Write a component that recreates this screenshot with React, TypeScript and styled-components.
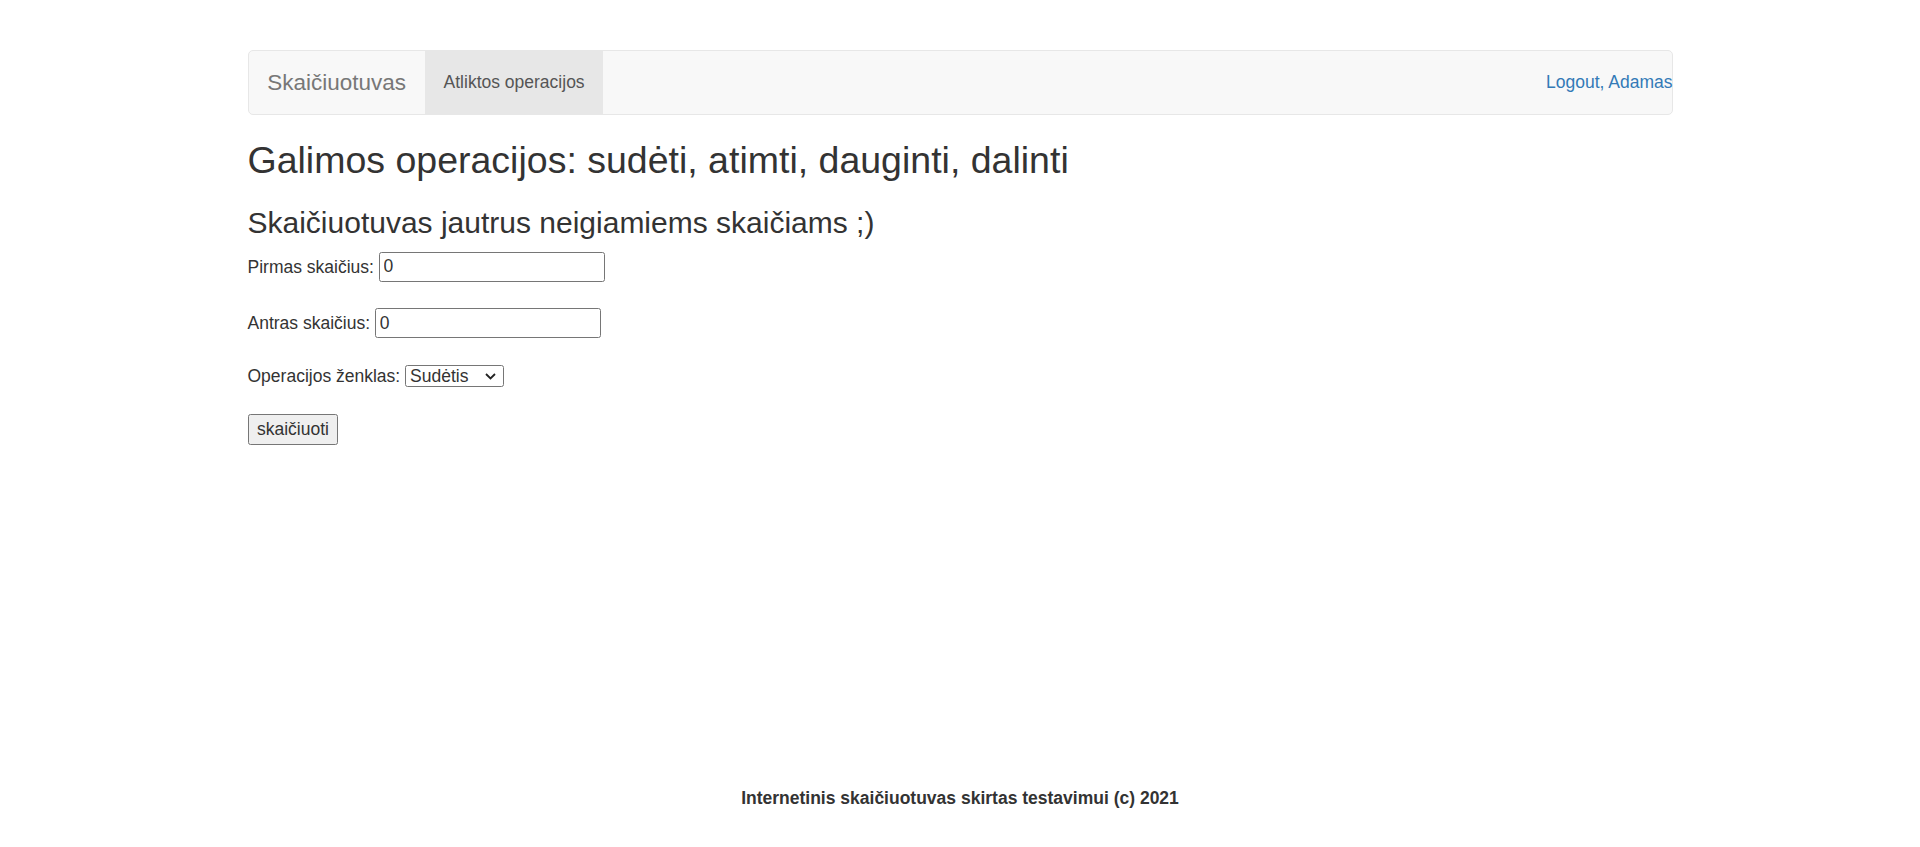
import React from "react";
import styled, { createGlobalStyle } from "styled-components";

const GlobalStyle = createGlobalStyle`
  html, body { margin: 0; padding: 0; background: #fff; }
  body {
    font-family: "Liberation Sans", Arial, Helvetica, sans-serif;
    font-size: 17.5px;
    line-height: 25px;
    color: #333;
  }
  *, *::before, *::after { box-sizing: border-box; }
`;

const Page = styled.div`
  min-height: 100vh;
  display: flex;
  flex-direction: column;
`;

const Container = styled.div`
  width: 1425px;
  margin: 0 auto;
`;

const Navbar = styled.nav`
  margin-top: 50px;
  height: 65px;
  display: flex;
  align-items: stretch;
  background: #f8f8f8;
  border: 1.25px solid #e7e7e7;
  border-radius: 5px;
`;

const Brand = styled.a`
  display: flex;
  align-items: center;
  padding: 0 18.75px;
  font-size: 22.5px;
  color: #777;
  text-decoration: none;
`;

const NavLink = styled.a<{ $active?: boolean }>`
  display: flex;
  align-items: center;
  padding: 0 18.75px;
  font-size: 17.5px;
  color: ${(p) => (p.$active ? "#555" : "#777")};
  background: ${(p) => (p.$active ? "#e7e7e7" : "transparent")};
  text-decoration: none;
`;

const RightLink = styled.a`
  margin-left: auto;
  display: flex;
  align-items: center;
  padding-right: 0;
  margin-right: -1px;
  color: #337ab7;
  text-decoration: none;
  font-size: 17.5px;
`;

const Title = styled.h2`
  margin: 25px 0 12.5px;
  font-size: 37.5px;
  line-height: 41.25px;
  font-weight: 500;
  color: #333;
`;

const Subtitle = styled.h3`
  margin: 25px 0 12.5px;
  font-size: 30px;
  line-height: 33px;
  font-weight: 500;
  color: #333;
`;

const Form = styled.form`
  display: flex;
  flex-direction: column;
  align-items: flex-start;
  gap: 26.5px;
`;

const Row = styled.div`
  display: flex;
  align-items: center;
  column-gap: 4.9px;
`;

const Label = styled.label`
  font-size: 17.5px;
  line-height: 20px;
  color: #333;
`;

const TextInput = styled.input`
  width: 226.5px;
  height: 30px;
  padding: 0 3.75px;
  margin: 0;
  border: 1.25px solid #767676;
  border-radius: 2.5px;
  font-family: inherit;
  font-size: 17.5px;
  color: #333;
  background: #fff;
  outline: none;
`;

const SelectWrap = styled.div`
  position: relative;
  display: inline-flex;
`;

const Select = styled.select`
  appearance: none;
  -webkit-appearance: none;
  width: 98.6px;
  height: 22.6px;
  padding: 0 0 0 4px;
  margin: 0;
  border: 1.25px solid #767676;
  border-radius: 2.5px;
  background: #fff;
  font-family: inherit;
  font-size: 17.5px;
  line-height: 20px;
  color: #333;
  outline: none;
`;

const Chevron = styled.svg`
  position: absolute;
  right: 7.5px;
  top: 8.5px;
  pointer-events: none;
`;

const Button = styled.button`
  height: 31px;
  padding: 0 8.5px;
  margin: 0;
  border: 1.25px solid #767676;
  border-radius: 2.5px;
  background: #efefef;
  font-family: inherit;
  font-size: 17.5px;
  color: #333;
  cursor: pointer;
`;

const Footer = styled.footer`
  margin-top: auto;
  padding-bottom: 36.5px;
  text-align: center;
  font-weight: bold;
  font-size: 17.5px;
  line-height: 25px;
  color: #333;
`;

export default function App() {
  return (
    <Page>
      <GlobalStyle />
      <Container>
        <Navbar>
          <Brand href="#">Skaičiuotuvas</Brand>
          <NavLink href="#" $active>
            Atliktos operacijos
          </NavLink>
          <RightLink href="#">Logout, Adamas</RightLink>
        </Navbar>
        <Title>Galimos operacijos: sudėti, atimti, dauginti, dalinti</Title>
        <Subtitle>Skaičiuotuvas jautrus neigiamiems skaičiams ;)</Subtitle>
        <Form onSubmit={(e) => e.preventDefault()}>
          <Row>
            <Label htmlFor="sk1">Pirmas skaičius:</Label>
            <TextInput id="sk1" type="text" defaultValue="0" />
          </Row>
          <Row>
            <Label htmlFor="sk2">Antras skaičius:</Label>
            <TextInput id="sk2" type="text" defaultValue="0" />
          </Row>
          <Row>
            <Label htmlFor="zenklas">Operacijos ženklas:</Label>
            <SelectWrap>
              <Select id="zenklas" defaultValue="+">
                <option value="+">Sudėtis</option>
                <option value="-">Atimtis</option>
                <option value="*">Daugyba</option>
                <option value="/">Dalyba</option>
              </Select>
              <Chevron width="11" height="7" viewBox="0 0 11 7">
                <path d="M1 1 L5.5 5.5 L10 1" fill="none" stroke="#222" strokeWidth="1.8" />
              </Chevron>
            </SelectWrap>
          </Row>
          <Button type="submit">skaičiuoti</Button>
        </Form>
      </Container>
      <Footer>Internetinis skaičiuotuvas skirtas testavimui (c) 2021</Footer>
    </Page>
  );
}
